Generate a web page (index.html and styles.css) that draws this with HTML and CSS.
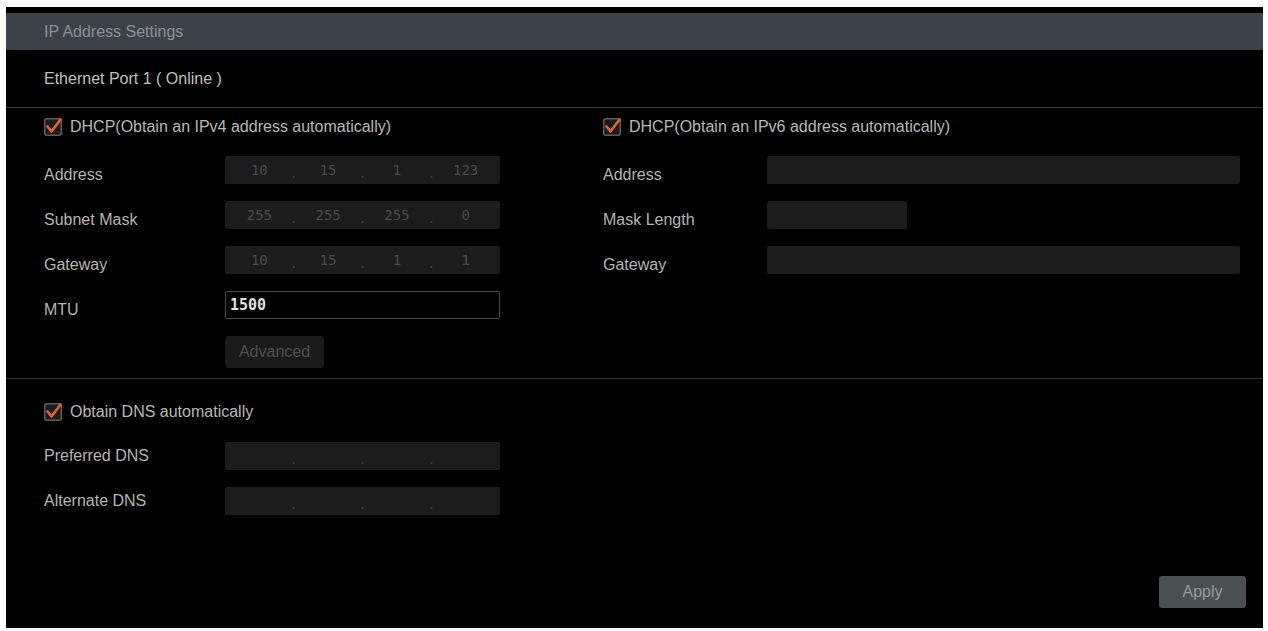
FILE: index.html
```html
<!DOCTYPE html>
<html lang="en">
<head>
    <meta charset="UTF-8">
    <meta name="viewport" content="width=device-width, initial-scale=1.0">
    <title>IP Address Settings</title>
    <link rel="stylesheet" href="styles.css">
</head>
<body>

    <div class="panel">
        <div class="panel-title">IP Address Settings</div>
        <div class="port">Ethernet Port 1 ( Online )</div>

        <div class="section dhcp">
            <div class="col">
                <label class="check">
                    <svg width="18" height="18" viewBox="0 0 18 18"><rect x="0.75" y="0.75" width="16.5" height="16.5" rx="2" fill="#1c1c1c" stroke="#5c5c5c" stroke-width="1.5"/><path d="M3.5 8.5 L7.5 13.5 L16.5 1.5" fill="none" stroke="#e4632b" stroke-width="2.6" stroke-linecap="round" stroke-linejoin="round"/></svg>
                    DHCP(Obtain an IPv4 address automatically)
                </label>
                <div class="row">
                    <span class="label">Address</span>
                    <div class="ip"><span>10</span><i>.</i><span>15</span><i>.</i><span>1</span><i>.</i><span>123</span></div>
                </div>
                <div class="row">
                    <span class="label">Subnet Mask</span>
                    <div class="ip"><span>255</span><i>.</i><span>255</span><i>.</i><span>255</span><i>.</i><span>0</span></div>
                </div>
                <div class="row">
                    <span class="label">Gateway</span>
                    <div class="ip"><span>10</span><i>.</i><span>15</span><i>.</i><span>1</span><i>.</i><span>1</span></div>
                </div>
                <div class="row">
                    <span class="label">MTU</span>
                    <input class="mtu" type="text" value="1500">
                </div>
                <div class="row">
                    <span class="label"></span>
                    <button class="btn-adv">Advanced</button>
                </div>
            </div>

            <div class="col right">
                <label class="check">
                    <svg width="18" height="18" viewBox="0 0 18 18"><rect x="0.75" y="0.75" width="16.5" height="16.5" rx="2" fill="#1c1c1c" stroke="#5c5c5c" stroke-width="1.5"/><path d="M3.5 8.5 L7.5 13.5 L16.5 1.5" fill="none" stroke="#e4632b" stroke-width="2.6" stroke-linecap="round" stroke-linejoin="round"/></svg>
                    DHCP(Obtain an IPv6 address automatically)
                </label>
                <div class="row">
                    <span class="label">Address</span>
                    <div class="field wide"></div>
                </div>
                <div class="row">
                    <span class="label">Mask Length</span>
                    <div class="field short"></div>
                </div>
                <div class="row">
                    <span class="label">Gateway</span>
                    <div class="field wide"></div>
                </div>
            </div>
        </div>

        <div class="section dns">
            <label class="check">
                <svg width="18" height="18" viewBox="0 0 18 18"><rect x="0.75" y="0.75" width="16.5" height="16.5" rx="2" fill="#1c1c1c" stroke="#5c5c5c" stroke-width="1.5"/><path d="M3.5 8.5 L7.5 13.5 L16.5 1.5" fill="none" stroke="#e4632b" stroke-width="2.6" stroke-linecap="round" stroke-linejoin="round"/></svg>
                Obtain DNS automatically
            </label>
            <div class="row">
                <span class="label">Preferred DNS</span>
                <div class="ip"><span></span><i>.</i><span></span><i>.</i><span></span><i>.</i><span></span></div>
            </div>
            <div class="row">
                <span class="label">Alternate DNS</span>
                <div class="ip"><span></span><i>.</i><span></span><i>.</i><span></span><i>.</i><span></span></div>
            </div>
        </div>

        <div class="footer">
            <button class="btn-apply">Apply</button>
        </div>
    </div>

</body>
</html>
```

FILE: styles.css
```css
body {
    margin: 0;
    padding: 0;
    background-color: #ffffff;
    font-family: "Liberation Sans", Arial, sans-serif;
    font-size: 16px;
}

.panel {
    margin: 7px 5px 0 6px;
    height: 621px;
    padding-top: 6px;
    box-sizing: border-box;
    background: #000;
    color: #b4b4b4;
    display: flex;
    flex-direction: column;
}

.panel-title {
    height: 37px;
    line-height: 37px;
    padding-left: 38px;
    background: #3d4249;
    color: #8a8f96;
}

.port {
    height: 57px;
    line-height: 57px;
    padding-left: 38px;
    color: #c0c0c0;
    border-bottom: 1px solid #333;
}

.section {
    padding-left: 38px;
}

.dhcp {
    display: grid;
    grid-template-columns: 559px 1fr;
    padding-top: 9px;
    padding-bottom: 10px;
    border-bottom: 1px solid #333;
}

.right {
    padding-right: 23px;
}

.check {
    display: flex;
    align-items: center;
    gap: 8px;
    height: 20px;
    margin-bottom: 19px;
    color: #b8b8b8;
}

.check svg {
    flex: none;
}

.row {
    display: flex;
    align-items: center;
    min-height: 28px;
    margin-bottom: 17px;
}

.row:last-child {
    margin-bottom: 0;
}

.label {
    width: 181px;
    flex: none;
}

/* labels in the DHCP block sit a little below the field centre */
.dhcp .label {
    align-self: flex-end;
    line-height: 18px;
}

.right .label {
    width: 164px;
}

.ip {
    width: 275px;
    height: 28px;
    display: flex;
    align-items: center;
    background: #1c1c1c;
    border-radius: 2px;
    font-family: "DejaVu Sans Mono", monospace;
    font-size: 14px;
    color: #4a4a4a;
}

.ip span {
    flex: 1;
    text-align: center;
}

.ip i {
    width: 0;
    display: flex;
    justify-content: center;
    font-style: normal;
    margin-top: 6px;
    color: #383838;
}

.field {
    height: 28px;
    background: #1c1c1c;
    border-radius: 2px;
}

.field.wide {
    flex: 1;
}

.field.short {
    width: 140px;
}

.mtu {
    width: 275px;
    height: 28px;
    box-sizing: border-box;
    margin: 0;
    padding: 0 4px;
    background: #000;
    border: 1px solid #4a4a4a;
    border-radius: 2px;
    color: #e0e0e0;
    font-family: "DejaVu Sans Mono", monospace;
    font-size: 15px;
    font-weight: bold;
    outline: none;
}

.btn-adv {
    width: 99px;
    height: 32px;
    margin: 0;
    border: none;
    border-radius: 3px;
    background: #1a1a1a;
    color: #4e4e4e;
    font-family: "Liberation Sans", Arial, sans-serif;
    font-size: 16px;
}

.dns {
    padding-top: 23px;
}

.dns .check {
    margin-bottom: 20px;
}

.footer {
    margin-top: auto;
    display: flex;
    justify-content: flex-end;
    padding: 0 17px 20px 0;
}

.btn-apply {
    width: 87px;
    height: 32px;
    border: none;
    border-radius: 3px;
    background: #4a5050;
    color: #969b9b;
    font-family: "Liberation Sans", Arial, sans-serif;
    font-size: 16px;
}
```
